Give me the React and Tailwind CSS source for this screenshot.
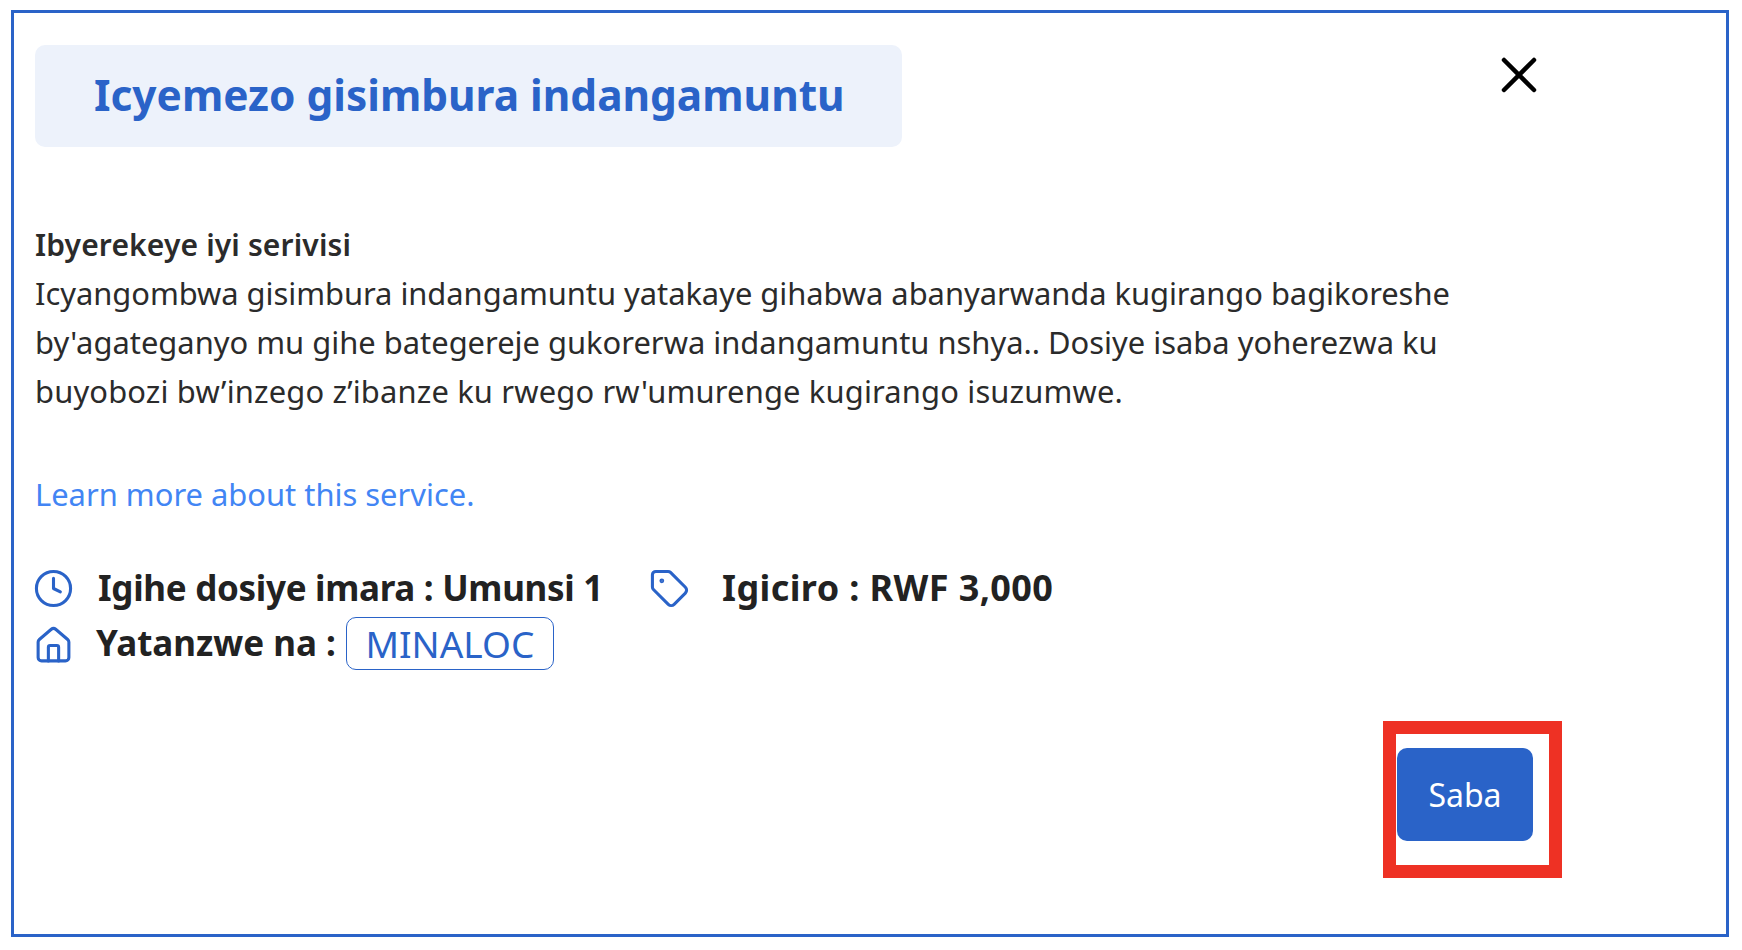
import React from "react";
import { Clock, Tag, House, X } from "lucide-react";

export default function App() {
  return (
    <div className="w-[1742px] h-[950px] bg-white pl-[11px] pt-[10px] overflow-hidden font-['Noto_Sans',sans-serif]">
      <div className="w-[1718px] h-[927px] border-[3px] border-[#2a63c8] pl-[21px] pr-[164px] pt-[32px] flex flex-col">
        <div className="flex justify-between items-start">
          <div className="w-[867px] h-[102px] bg-[#edf2fb] rounded-[10px] pl-[59px] pb-[2px] flex items-center">
            <h1 className="text-[#2a63c8] text-[42.4px] font-bold leading-none">Icyemezo gisimbura indangamuntu</h1>
          </div>
          <button className="mt-[0px] mr-[13px] text-black">
            <X size={60} strokeWidth={1.8} />
          </button>
        </div>
        <div className="mt-[73px] text-[30.9px] leading-[49px] text-[#2b2b2b] w-[1460px]">
          <p className="font-semibold text-[30px] tracking-[0.14px]">Ibyerekeye iyi serivisi</p>
          <p className="tracking-[-0.04px]">Icyangombwa gisimbura indangamuntu yatakaye gihabwa abanyarwanda kugirango bagikoreshe</p>
          <p>by'agateganyo mu gihe bategereje gukorerwa indangamuntu nshya.. Dosiye isaba yoherezwa ku</p>
          <p className="tracking-[0.16px]">buyobozi bw’inzego z’ibanze ku rwego rw'umurenge kugirango isuzumwe.</p>
        </div>
        <a className="mt-[54px] text-[30.9px] leading-[49px] text-[#4285f4]">Learn more about this service.</a>
        <div className="mt-[49px] h-[40px] flex items-center text-[35px] font-bold text-[#222222]">
          <Clock size={41} strokeWidth={1.8} className="ml-[-2px] text-[#2a63c8]" />
          <span className="ml-[24px] tracking-[-0.3px]">Igihe dosiye imara : Umunsi 1</span>
          <Tag size={41} strokeWidth={1.8} className="ml-[46px] text-[#2a63c8]" />
          <span className="ml-[32px] text-[36px] tracking-[0.4px]">Igiciro : RWF 3,000</span>
        </div>
        <div className="mt-[9px] flex items-center text-[35px] font-bold text-[#222222]">
          <House size={41} strokeWidth={1.8} className="ml-[-2px] mt-[3px] text-[#2a63c8]" />
          <span className="ml-[22px]">Yatanzwe na :</span>
          <span className="ml-[10px] h-[53px] w-[208px] flex items-center justify-center border-[1.5px] border-[#2a63c8] rounded-[10px] text-[#2a63c8] text-[37px] font-normal">MINALOC</span>
        </div>
        <div className="mt-[51px] flex justify-end">
          <div className="w-[179px] h-[157px] border-[13px] border-[#ee3124] pt-[14px] pl-[1px]">
            <button className="w-[136px] h-[93px] bg-[#2a63c8] rounded-[10px] text-white text-[32px]">Saba</button>
          </div>
        </div>
      </div>
    </div>
  );
}
